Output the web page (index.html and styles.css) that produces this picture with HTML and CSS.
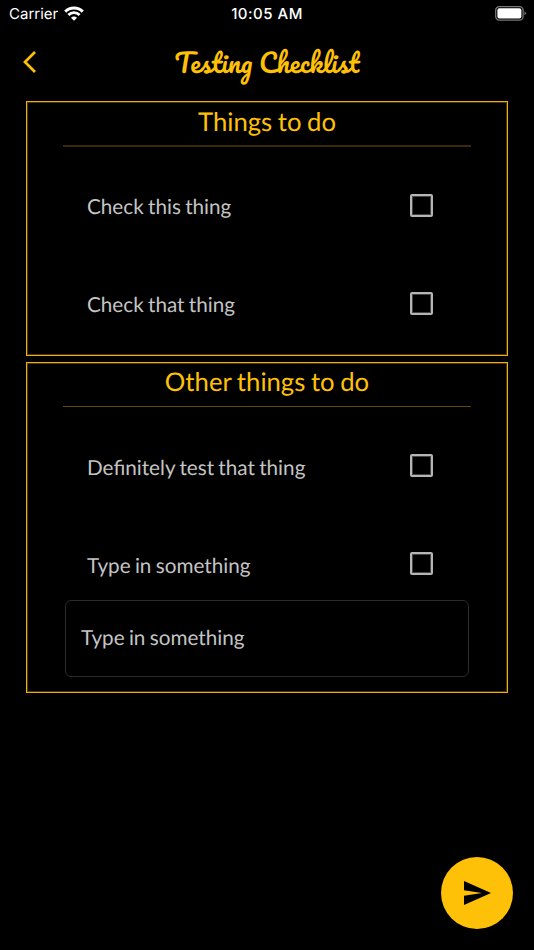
FILE: index.html
```
<!DOCTYPE html>
<html lang="en">
<head>
    <meta charset="UTF-8">
    <meta name="viewport" content="width=device-width, initial-scale=1.0">
    <title>Testing Checklist</title>
    <link rel="stylesheet" href="styles.css">
</head>
<body>
    <div class="status-bar">
        <div class="carrier">
            <span>Carrier</span>
            <svg width="20" height="15" viewBox="0 0 20 15" fill="none" stroke="#fff" stroke-width="2.9">
                <path d="M1.2 5.6a12.5 12.5 0 0 1 17.6 0"/>
                <path d="M4.4 9a7.9 7.9 0 0 1 11.2 0"/>
                <path d="M10 14.8l-3-3a4.2 4.2 0 0 1 6 0z" fill="#fff" stroke="none"/>
            </svg>
        </div>
        <div class="time">10:05 AM</div>
        <svg class="battery" width="32" height="15" viewBox="0 0 32 15">
            <rect x="0.7" y="0.7" width="27.4" height="13.4" rx="3.6" fill="none" stroke="#777" stroke-width="1.3"/>
            <rect x="2.4" y="2.3" width="24" height="10.1" rx="2" fill="#fff"/>
            <path d="M29.5 5.2q3 2.1 0 4.4z" fill="#777"/>
        </svg>
    </div>

    <header class="header">
        <svg class="back" width="14" height="22" viewBox="0 0 14 22" fill="none" stroke="#ffc107" stroke-width="2.7">
            <path d="M12 1L2 11l10 10"/>
        </svg>
        <h1 class="title">Testing Checklist</h1>
    </header>

    <main class="checklist">
        <section class="card">
            <h2 class="card-title">Things to do</h2>
            <label class="item"><span>Check this thing</span><input type="checkbox"></label>
            <label class="item"><span>Check that thing</span><input type="checkbox"></label>
        </section>
        <section class="card card-tall">
            <h2 class="card-title">Other things to do</h2>
            <label class="item"><span>Definitely test that thing</span><input type="checkbox"></label>
            <label class="item"><span>Type in something</span><input type="checkbox"></label>
            <input class="answer" type="text" placeholder="Type in something">
        </section>
    </main>

    <button class="send" aria-label="Send">
        <svg width="27" height="24" viewBox="0 0 27 24">
            <path d="M0 0l27 12L0 24v-9.3L18 12 0 9.3z" fill="#000"/>
        </svg>
    </button>
</body>
</html>
```

FILE: styles.css
```
* {
    margin: 0;
    padding: 0;
    box-sizing: border-box;
}

:root {
    --accent-color: #ffc107;
    --text-color: #c4c4c4;
}

body {
    height: 950px;
    background: #000;
    color: var(--text-color);
    font-family: Lato, sans-serif;
    text-rendering: geometricPrecision;
    overflow: hidden;
}

.status-bar {
    display: grid;
    grid-template-columns: 1fr auto 1fr;
    align-items: center;
    height: 28px;
    padding: 0 7px 0 9px;
    color: #fff;
    font-family: Inter, sans-serif;
    font-size: 15px;
}

.carrier {
    display: flex;
    align-items: center;
    gap: 6px;
}

.carrier span {
    margin-top: -2px;
}

.carrier svg {
    margin-top: -2px;
}

.time {
    margin: -1px 0 0 -2px;
    font-size: 15px;
    font-weight: 500;
    letter-spacing: 0.5px;
}

.battery {
    justify-self: end;
    margin-top: -2px;
}

.header {
    display: grid;
    grid-template-columns: 60px 1fr 60px;
    align-items: center;
    height: 73px;
}

.back {
    margin: -5px 0 0 23px;
}

.title {
    margin-top: -5px;
    color: var(--accent-color);
    font-family: Pacifico, cursive;
    font-size: 25.8px;
    font-weight: 400;
    text-align: center;
    white-space: nowrap;
}

.checklist {
    display: flex;
    flex-direction: column;
    gap: 6px;
    padding: 0 26px;
    word-spacing: -1px;
}

.card {
    height: 255px;
    padding: 0 36px;
    border: 1px solid #f0b005;
    box-shadow: inset 0 0 0 1px #4a3600;
}

.card-tall {
    height: 331px;
}

.card-title {
    height: 45px;
    border-bottom: 2px solid #3c2b02;
    color: var(--accent-color);
    font-size: 25.7px;
    font-weight: 400;
    line-height: 40px;
    text-align: center;
}

.card-tall .card-title {
    height: 44px;
    margin-bottom: 11px;
    border-bottom: 1px solid #634806;
    line-height: 38px;
}

.item {
    display: flex;
    align-items: center;
    justify-content: space-between;
    height: 98px;
    padding: 0 38px 2px 24px;
    font-size: 20.7px;
}

.item span {
    padding-top: 3px;
}

.card-title + .item {
    margin-top: 10px;
}

.item input {
    appearance: none;
    width: 23px;
    height: 23px;
    border: 2px solid #b5b5b5;
    border-radius: 2px;
    box-shadow: inset 0 0 0 1px #444;
}

.card-tall .item input {
    margin-top: -1px;
}

.answer {
    display: block;
    width: 404px;
    height: 77px;
    margin: -14px 0 0 2px;
    padding: 0 15px 1px;
    background: none;
    border: 1px solid #2b2b2b;
    border-radius: 6px;
    color: var(--text-color);
    font-family: inherit;
    font-size: 20.7px;
    text-rendering: inherit;
    word-spacing: inherit;
}

.answer::placeholder {
    color: var(--text-color);
}

.send {
    position: absolute;
    right: 21px;
    bottom: 21px;
    display: flex;
    align-items: center;
    justify-content: center;
    width: 72px;
    height: 72px;
    background: var(--accent-color);
    border: none;
    border-radius: 50%;
}
```
